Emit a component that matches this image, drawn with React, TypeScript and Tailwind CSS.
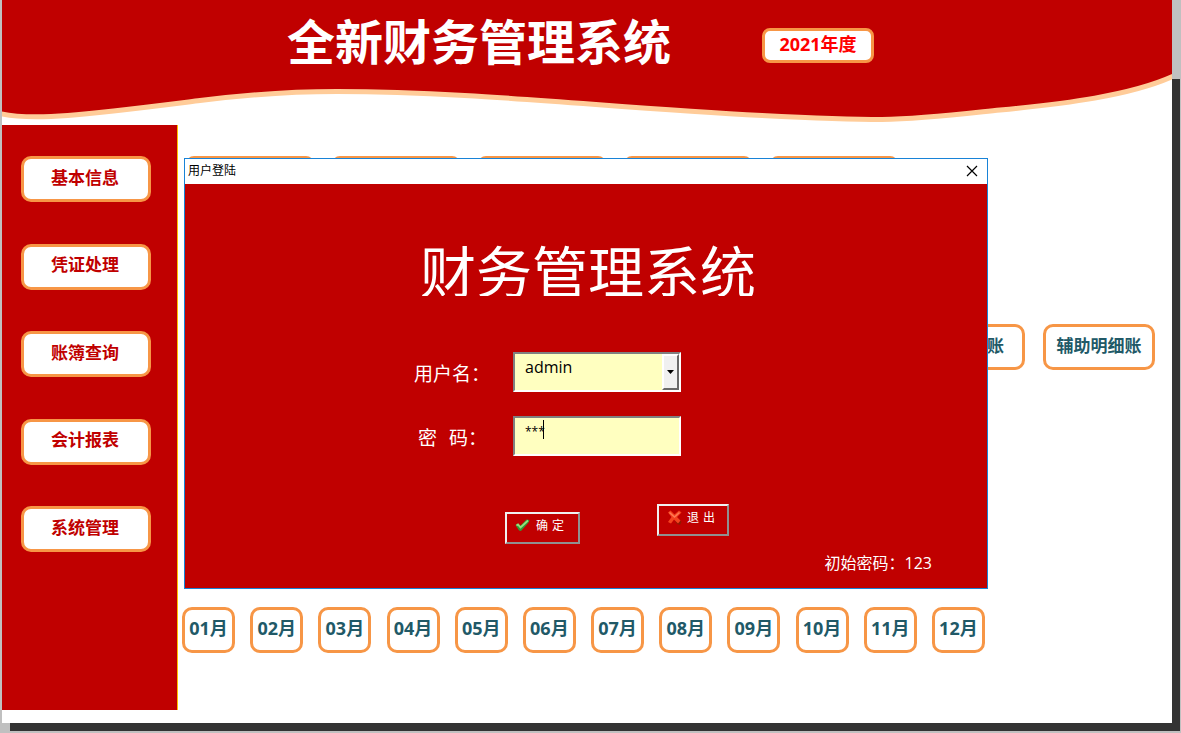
import { useState } from "react";

interface NavItem {
    id: string;
    label: string;
}

const navItems: NavItem[] = [
    { id: "base", label: "基本信息" },
    { id: "voucher", label: "凭证处理" },
    { id: "ledger", label: "账簿查询" },
    { id: "report", label: "会计报表" },
    { id: "system", label: "系统管理" },
];

const months = ["01", "02", "03", "04", "05", "06", "07", "08", "09", "10", "11", "12"];

const shortcuts = ["s1", "s2", "s3", "s4", "s5"];

function Banner() {
    return (
        <header className="relative h-[125px] shrink-0">
            {/* Wave */}
            <svg className="absolute inset-0 h-full w-full" viewBox="0 0 1170 125" preserveAspectRatio="none" aria-hidden="true">
                <path
                    d="M-4 0V113C30 122 90 114 198 100.500C250 94 300 91.500 335 91.500C470 91.500 600 107 760 115.500C800 117.500 840 119.500 880 119.500C920 119 960 114 998 110C1060 104 1130 96 1174 75V0Z"
                    fill="#c00000"
                />
                <path
                    d="M-4 113C30 122 90 114 198 100.500C250 94 300 91.500 335 91.500C470 91.500 600 107 760 115.500C800 117.500 840 119.500 880 119.500C920 119 960 114 998 110C1060 104 1130 96 1174 75"
                    fill="none"
                    stroke="#ffcc99"
                    strokeWidth="5"
                />
            </svg>
            <div className="relative flex items-start pl-[285px]">
                <h1 className="pt-2 text-[48px] leading-[68px] font-bold whitespace-nowrap text-white">全新财务管理系统</h1>
                <button className="mt-7 ml-[91px] h-[35px] w-[112px] rounded-lg border-3 border-[#f79646] bg-white pb-1 text-[18px] leading-none font-bold text-[#ff0000]">
                    2021年度
                </button>
            </div>
        </header>
    );
}

function Sidebar() {
    return (
        <nav className="flex h-[585px] w-[176px] shrink-0 flex-col border-r border-[#ffc000] bg-[#c00000] pt-[31px] pl-[19px]">
            <div className="flex h-[396px] flex-col justify-between">
                {navItems.map((item) => (
                    <button
                        key={item.id}
                        className="h-[46px] w-[130px] shrink-0 rounded-[10px] border-3 border-[#f79646] bg-white pr-[2px] pb-1 text-[17px] leading-none font-bold text-[#c00000]"
                    >
                        {item.label}
                    </button>
                ))}
            </div>
        </nav>
    );
}

function CheckIcon() {
    return (
        <svg width="16" height="16" viewBox="0 0 16 16" aria-hidden="true">
            <path d="M0.500 7L3 5.500L5.500 7.500L11.500 1.500L14.500 2L13.500 4.500L6 13L4 12.500Z" fill="#2f9c38" />
            <path d="M1.500 7.500L3 6.500L5.500 9.500L13 2.500" fill="none" stroke="#96e07c" strokeWidth="1.800" />
        </svg>
    );
}

function CrossIcon() {
    return (
        <svg width="16" height="16" viewBox="0 0 16 16" aria-hidden="true">
            <path d="M8 11L12 8.500L14.500 12L13 15L10 14Z" fill="#8f1800" />
            <path d="M1 2.500L3.500 0.500L7.500 4.500L12 0.500L14.500 2.500L10 7L13.500 10.500L11 13.500L7 9.500L4 13.500L1 12L4.500 7Z" fill="#f4411f" />
            <path d="M2.500 2.500L7.500 7L12.500 2.500" fill="none" stroke="#ff7a55" strokeWidth="1.500" />
        </svg>
    );
}

function LoginDialog() {
    const [user, setUser] = useState("admin");
    const [password, setPassword] = useState("***");

    return (
        <section
            role="dialog"
            aria-labelledby="login-title"
            className="absolute top-[158px] left-[182px] flex h-[431px] w-[804px] flex-col border border-[#1883d7] bg-[#c00000] text-white"
        >
            <div className="flex h-[25px] shrink-0 items-center justify-between bg-white pr-2 pb-[2px] pl-[3px] text-black">
                <h2 id="login-title" className="text-[12px] leading-none">用户登陆</h2>
                <button aria-label="关闭">
                    <svg width="14" height="14" viewBox="0 0 14 14" aria-hidden="true">
                        <path d="M2 2L12 12M12 2L2 12" stroke="black" strokeWidth="1.200" />
                    </svg>
                </button>
            </div>

            <form className="flex flex-col" onSubmit={(e) => e.preventDefault()}>
                <div className="mt-[52px] h-[60px] overflow-hidden pl-[235px] text-[56px] leading-[70px] whitespace-nowrap">
                    财务管理系统
                </div>

                <div className="mt-14 flex h-10 items-center pl-[229px]">
                    <label htmlFor="user" className="w-[99px] pt-1 text-[19px] whitespace-pre">用户名：</label>
                    <div className="relative h-10 w-[168px]">
                        <select
                            id="user"
                            value={user}
                            onChange={(e) => setUser(e.target.value)}
                            className="h-full w-full appearance-none border-2 border-t-[#808080] border-r-white border-b-white border-l-[#808080] bg-[#ffffc0] pb-[10px] pl-[10px] text-[16px] leading-6 text-black outline-none"
                        >
                            <option value="admin">admin</option>
                        </select>
                        <span className="pointer-events-none absolute top-[2px] right-[2px] flex h-9 w-[17px] items-center justify-center border-2 border-t-white border-r-[#696969] border-b-[#696969] border-l-white bg-[#f0f0f0]">
                            <svg width="7" height="4" viewBox="0 0 7 4" aria-hidden="true">
                                <path d="M0 0H7L3.500 4Z" fill="black" />
                            </svg>
                        </span>
                    </div>
                </div>

                <div className="mt-6 flex h-10 items-center pl-[233px]">
                    <label htmlFor="password" className="flex w-[95px] pt-1 text-[19px]">
                        <span className="mr-3">密</span>
                        <span>码：</span>
                    </label>
                    <div className="relative">
                        <input
                            id="password"
                            value={password}
                            onChange={(e) => setPassword(e.target.value)}
                            className="h-10 w-[168px] border-2 border-t-[#808080] border-r-white border-b-white border-l-[#808080] bg-[#ffffc0] pb-[10px] pl-[10px] text-[12px] text-black outline-none"
                        />
                        <span className="pointer-events-none absolute top-1 left-[30px] h-[19px] w-px bg-black" />
                    </div>
                </div>

                <div className="mt-12 flex items-start pl-[320px]">
                    <button
                        type="submit"
                        className="mt-2 flex h-8 w-[75px] items-center border-2 border-t-[#f0f0f0] border-r-[#909090] border-b-[#909090] border-l-[#f0f0f0] pb-1 pl-2 text-[12px]"
                    >
                        <CheckIcon />
                        <span className="ml-[5px]">确</span>
                        <span className="ml-1">定</span>
                    </button>
                    <button
                        type="button"
                        className="ml-[77px] flex h-8 w-[72px] items-center border-2 border-t-[#f0f0f0] border-r-[#909090] border-b-[#909090] border-l-[#f0f0f0] pb-1 pl-2 text-[12px]"
                    >
                        <CrossIcon />
                        <span className="ml-1">退</span>
                        <span className="ml-1">出</span>
                    </button>
                </div>
                <p className="mt-[7px] pr-[55px] text-right text-[16px] leading-6">初始密码：123</p>
            </form>
        </section>
    );
}

export default function App() {
    return (
        <div className="flex min-h-screen flex-col bg-[#c0c0c0] pb-[2px] font-['Open_Sans','Noto_Sans_CJK_SC',sans-serif]">
            <div className="flex flex-1 pr-px pl-[2px]">
                <main className="relative flex min-w-0 flex-1 flex-col bg-white">
                    <Banner />
                    <div className="flex">
                        <Sidebar />
                        <div className="min-w-0 flex-1 pt-[31px] pl-1">
                            <div className="flex gap-[18px] pl-1">
                                {shortcuts.map((id) => (
                                    <button key={id} aria-label={id} className="h-[46px] w-[128px] rounded-lg border-3 border-[#f79646]" />
                                ))}
                            </div>
                            <div className="mt-[122px] flex justify-end gap-[18px] pr-[17px]">
                                <button className="h-[46px] w-[112px] rounded-[10px] border-3 border-[#f79646] pr-[18px] pb-1 text-right text-[17px] leading-none font-bold text-[#215967]">
                                    账
                                </button>
                                <button className="h-[46px] w-[112px] rounded-[10px] border-3 border-[#f79646] pb-1 text-[17px] leading-none font-bold whitespace-nowrap text-[#215967]">
                                    辅助明细账
                                </button>
                            </div>
                            <div className="mt-[237px] flex max-w-[803px] justify-between">
                                {months.map((m) => (
                                    <button
                                        key={m}
                                        className="h-[46px] w-[53px] rounded-[10px] border-3 border-[#f79646] pb-1 text-[18px] leading-none font-bold whitespace-nowrap text-[#215967]"
                                    >
                                        {m}月
                                    </button>
                                ))}
                            </div>
                        </div>
                    </div>
                    <LoginDialog />
                </main>
                {/* Sheet shadow, right side */}
                <div className="w-2 shrink-0 pt-[79px]">
                    <div className="h-full bg-[#333333]" />
                </div>
            </div>
            <div className="mr-px ml-[10px] h-2 bg-[#333333]" />
        </div>
    );
}
